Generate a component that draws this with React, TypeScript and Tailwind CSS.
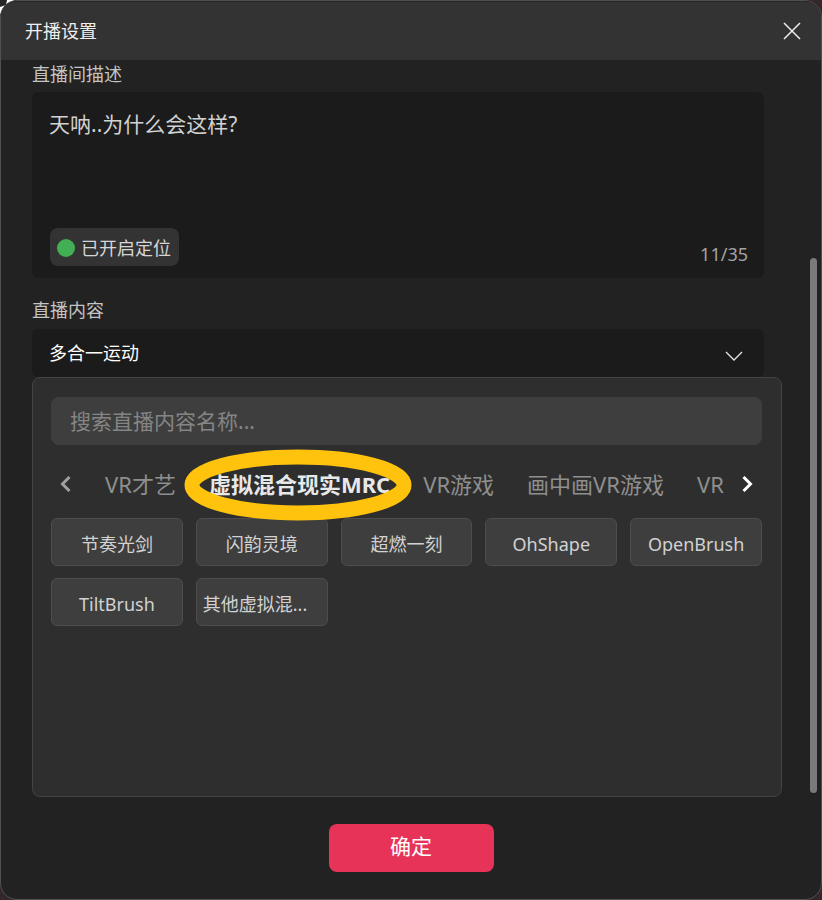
import { useState } from "react";

const tabs = ["VR才艺", "虚拟混合现实MRC", "VR游戏", "画中画VR游戏", "VR"];

const contents = ["节奏光剑", "闪韵灵境", "超燃一刻", "OhShape", "OpenBrush", "TiltBrush", "其他虚拟混..."];

const Highlight = () => (
  <svg viewBox="0 0 232 76" className="pointer-events-none absolute top-1/2 left-1/2 h-[76px] w-[232px] max-w-none -translate-x-1/2 -translate-y-1/2" aria-hidden="true">
    <ellipse cx="114" cy="39" rx="106" ry="28" fill="none" stroke="#ffc30d" strokeWidth="15" />
  </svg>
);

const Header = () => (
  <header className="flex h-[59px] items-center justify-between border-t border-[#262626] bg-[#333333] pr-5 pl-6">
    <h1 className="text-[18px] leading-6 text-[#efefef]">开播设置</h1>
    <button type="button" aria-label="关闭" className="text-[#eeeeee]">
      <svg viewBox="0 0 18 18" className="h-[18px] w-[18px]" fill="none" stroke="currentColor" strokeWidth="1.5">
        <path d="M1 1l16 16M17 1L1 17" />
      </svg>
    </button>
  </header>
);

const Description = () => {
  const [text, setText] = useState<string>("天呐..为什么会这样?");

  return (
    <section className="mr-[18px] pt-0.5">
      <label htmlFor="description" className="block text-[18px] leading-6 text-[#c4c4c4]">
        直播间描述
      </label>
      <div className="mt-1.5 flex h-[186px] flex-col rounded-md bg-[#1b1b1b] px-[17px] pt-[18px] pb-3">
        <textarea
          id="description"
          maxLength={35}
          value={text}
          onChange={(e) => setText(e.target.value)}
          className="w-full flex-1 resize-none bg-transparent text-[21px] leading-7 text-[#d2d2d2] outline-none"
        />
        <div className="flex items-end justify-between">
          <button type="button" className="ml-px flex h-[38px] items-center gap-1.5 rounded-lg bg-[#333333] pt-0.5 pr-2 pl-[7px] text-[18px] leading-6 text-[#d6d6d6]">
            <span className="h-[18px] w-[18px] rounded-full bg-[#42af54]" />
            已开启定位
          </button>
          <span className="-mr-px text-[18px] leading-6 text-[#a3a3a3]">{text.length}/35</span>
        </div>
      </div>
    </section>
  );
};

const ContentPicker = () => {
  const [active, setActive] = useState<number>(1);

  return (
    <div className="h-[420px] rounded-lg border border-[#434343] bg-[#2e2e2e] pt-[19px] pr-[19px] pl-[18px]">
      <input
        type="search"
        aria-label="搜索直播内容名称"
        placeholder="搜索直播内容名称..."
        className="h-12 w-full rounded-lg bg-[#3e3e3e] px-[19px] text-[21px] leading-7 text-[#d2d2d2] outline-none placeholder:text-[#858585]"
      />
      <div className="flex h-[73px] items-center pt-1 pr-[9px] pl-[9px]">
        <button type="button" aria-label="上一页" className="text-[#a0a0a0]">
          <svg viewBox="0 0 11 16" className="h-4 w-[11px]" fill="none" stroke="currentColor" strokeWidth="3">
            <path d="M9.5 1L2.5 8l7 7" />
          </svg>
        </button>
        <div role="tablist" className="ml-[34px] flex min-w-0 flex-1 gap-[33px] whitespace-nowrap">
          {tabs.map((tab, i) => (
            <button
              key={tab}
              type="button"
              role="tab"
              aria-selected={i === active}
              onClick={() => setActive(i)}
              className={`relative text-[22px] leading-7 ${i === active ? "font-bold text-[#e8e8e8]" : "text-[#8f8f8f]"}`}
            >
              {tab}
              {i === 1 && <Highlight />}
            </button>
          ))}
        </div>
        <button type="button" aria-label="下一页" className="text-white">
          <svg viewBox="0 0 11 16" className="h-4 w-[11px]" fill="none" stroke="currentColor" strokeWidth="3">
            <path d="M1.5 1l7 7-7 7" />
          </svg>
        </button>
      </div>
      <div className="grid grid-cols-5 gap-x-[13px] gap-y-3">
        {contents.map((name) => (
          <button
            key={name}
            type="button"
            className={`h-12 rounded-md border border-[#4d4d4d] bg-[#3e3e3e] px-1.5 pt-1 text-[18px] leading-6 whitespace-nowrap text-[#d2d2d2] ${name.endsWith("...") ? "text-left" : "text-center"}`}
          >
            {name}
          </button>
        ))}
      </div>
    </div>
  );
};

const App = () => {
  return (
    <div className="relative min-h-screen bg-[#33272a] font-['Noto_Sans','Noto_Sans_CJK_SC',sans-serif]">
      <svg viewBox="0 0 14 14" className="absolute top-0 left-0 h-3.5 w-3.5" aria-hidden="true">
        <path d="M0 0h14v14H0z" fill="#ffffff" />
        <path d="M0 0h7L6 5 0 7z" fill="#262626" />
      </svg>
      <main className="relative flex min-h-screen flex-col overflow-hidden rounded-[17px] border border-[#505050] bg-[#222222]">
        <Header />
        <div className="flex pr-1">
          <div className="min-w-0 flex-1 pl-[31px]">
            <Description />
            <section className="mt-5">
              <label htmlFor="content" className="block text-[18px] leading-6 text-[#c4c4c4]">
                直播内容
              </label>
              <div className="relative mt-[7px] mr-[18px]">
                <select id="content" className="h-12 w-full appearance-none rounded-md bg-[#1b1b1b] px-[17px] text-[18px] leading-6 text-white outline-none">
                  <option>多合一运动</option>
                </select>
                <svg viewBox="0 0 18 10" className="pointer-events-none absolute top-[22px] right-[21px] h-2.5 w-[18px]" fill="none" stroke="#e6e6e6" strokeWidth="1.3">
                  <path d="M1 1l8 8 8-8" />
                </svg>
              </div>
              <ContentPicker />
            </section>
          </div>
          <div className="ml-7 flex w-[7px] flex-col justify-end pb-1" aria-hidden="true">
            <div className="h-[73%] rounded-full bg-[#7a7a7a]" />
          </div>
        </div>
        <footer className="flex justify-center py-[27px]">
          <button type="button" className="h-12 w-[165px] rounded-lg bg-[#e73357] pb-1 text-[21px] leading-7 text-white">
            确定
          </button>
        </footer>
      </main>
    </div>
  );
};

export default App;
